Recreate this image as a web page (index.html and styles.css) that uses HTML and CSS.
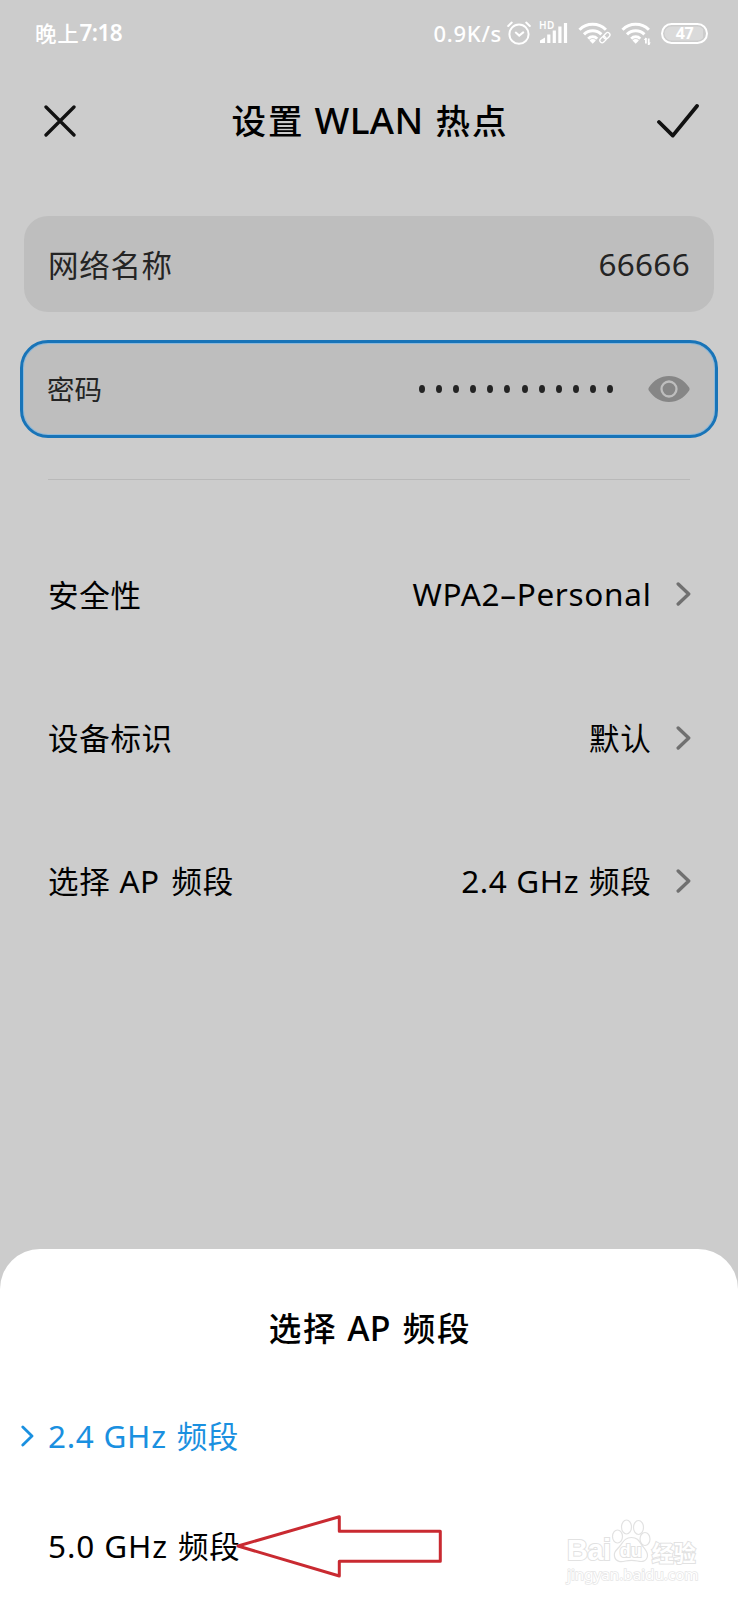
FILE: index.html
```html
<!DOCTYPE html>
<html lang="zh-CN">
<head>
<meta charset="utf-8">
<title>设置 WLAN 热点</title>
<link rel="stylesheet" href="styles.css">
</head>
<body>
<div class="phone">
  <header class="status">
    <div class="clock">晚上<span class="clock-num">7:18</span></div>
    <div class="status-right">
      <span class="speed">0.9K/s</span>
      <svg class="ic-alarm" width="24" height="24" viewBox="0 0 24 24" fill="none" stroke="#fff" stroke-width="2" stroke-linecap="round"><circle cx="12" cy="13.2" r="9.6"/><path d="M1.2 5 4.8 1.6M22.8 5 19.2 1.6M8.8 11.6l3.4 3 4-3.2"/></svg>
      <div class="signal">
        <span class="hd">HD</span>
        <svg width="29" height="24" viewBox="0 0 29 24" fill="#fff"><path d="M1 22v-2.5l5-3V22zM8.2 13.6h3.2V22H8.2zM13.7 9.4h3.2V22h-3.2zM19.3 5.6h3.2V22h-3.2zM24.9 2h3.2v20h-3.2z"/></svg>
      </div>
      <svg class="ic-wifi" width="34" height="24" viewBox="0 0 34 24" fill="none" stroke="#fff" stroke-width="3"><path d="M1.5 8.800a18.500 18.500 0 0 1 26.4 0M6 13.400a12.200 12.200 0 0 1 17.4 0M10.200 17.700a6.400 6.400 0 0 1 9 0"/><path d="m14.7 22.8-3.2-3.400a4.600 4.600 0 0 1 6.400 0z" fill="#fff" stroke="none"/><g stroke="#ccc" stroke-width="7"><path d="m23.500 20.500 7.500-8"/></g><g stroke-width="1.300"><rect x="21.500" y="16.300" width="7" height="4.600" rx="2.300" transform="rotate(-45 25 18.600)"/><rect x="25.300" y="12.400" width="7" height="4.600" rx="2.300" transform="rotate(-45 28.800 14.700)"/></g></svg>
      <svg class="ic-wifi2" width="32" height="24" viewBox="0 0 32 24" fill="none" stroke="#fff" stroke-width="3"><path d="M1.5 8.800a18.500 18.500 0 0 1 26.4 0M6 13.400a12.200 12.200 0 0 1 17.4 0M10.200 17.700a6.400 6.400 0 0 1 9 0"/><path d="m14.7 22.8-3.2-3.400a4.600 4.600 0 0 1 6.400 0z" fill="#fff" stroke="none"/><path d="M22.5 24v-9h8v9z" fill="#ccc" stroke="none"/><path d="M24.9 17v5.500M27.700 17.500V24" stroke-width="1.800"/><path d="m22.8 19 2.100-2.800v2.800zM29.800 21.600 27.700 24.400v-2.800z" fill="#fff" stroke="none"/></svg>
      <div class="battery"><span>47</span></div>
    </div>
  </header>

  <nav class="bar">
    <svg width="32" height="32" viewBox="0 0 32 32" fill="none" stroke="#111" stroke-width="3.3" stroke-linecap="round"><path d="m2 2 28 28M30 2 2 30"/></svg>
    <h1>设置<span class="lat">WLAN</span>热点</h1>
    <svg width="42" height="34" viewBox="0 0 42 34" fill="none" stroke="#111" stroke-width="3.8" stroke-linecap="round" stroke-linejoin="round"><path d="M2 18 15.8 31.6 40 2"/></svg>
  </nav>

  <section class="fields">
    <div class="field"><span class="field-label">网络名称</span><span class="field-value">66666</span></div>
    <div class="field focused">
      <span class="field-label small">密码</span>
      <div class="dots"><i></i><i></i><i></i><i></i><i></i><i></i><i></i><i></i><i></i><i></i><i></i><i></i></div>
      <svg width="42" height="28" viewBox="0 0 42 28"><path d="M1 12.2C6 5 12.500 1 21 1s15 4 20 11.200q1.200 1.800 0 3.600C36 23 29.500 27 21 27S6 23 1 15.800q-1.200-1.800 0-3.600z" fill="#868686"/><circle cx="21" cy="14" r="7.500" fill="none" stroke="#bebebe" stroke-width="2.300"/></svg>
    </div>
  </section>

  <div class="divider"></div>

  <section class="rows">
    <div class="row"><span>安全性</span><span class="value"><span class="lat wpa">WPA2–Personal</span></span><svg class="chev" width="15" height="24" viewBox="0 0 15 24"><path d="m2.200 2 10.500 10-10.500 10"/></svg></div>
    <div class="row"><span>设备标识</span><span class="value">默认</span><svg class="chev" width="15" height="24" viewBox="0 0 15 24"><path d="m2.200 2 10.500 10-10.500 10"/></svg></div>
    <div class="row"><span>选择<span class="lat ap">AP</span>频段</span><span class="value"><span class="lat ghz">2.4 GHz</span>频段</span><svg class="chev" width="15" height="24" viewBox="0 0 15 24"><path d="m2.200 2 10.500 10-10.500 10"/></svg></div>
  </section>

  <section class="sheet">
    <h2>选择<span class="lat">AP</span>频段</h2>
    <div class="option active"><svg width="13" height="22" viewBox="0 0 13 22"><path d="m1.800 2 9.200 9-9.200 9"/></svg><span><span class="lat ghz">2.4 GHz</span>频段</span></div>
    <div class="option"><span><span class="lat ghz five">5.0 GHz</span>频段</span></div>
  </section>

  <svg class="arrow" width="208" height="66" viewBox="0 0 208 66"><path d="m3 34 101.300-29.300v14.600h101v30h-101V64z"/></svg>

  <div class="mark">
    <div class="mark-top">
      <span class="mark-bai">Bai</span>
      <div class="paw">
        <svg width="40" height="45" viewBox="0 0 40 45" fill="#fff" stroke="#e2e2e2" stroke-width="1.200"><ellipse cx="6.500" cy="17.500" rx="5" ry="6.500"/><ellipse cx="15.500" cy="8" rx="5" ry="7"/><ellipse cx="27.500" cy="8.500" rx="5" ry="7"/><ellipse cx="34" cy="20" rx="5" ry="6.500"/><path d="M20.500 18.500c-7 0-8.500 5-12 9s-6 6-5 10c1.500 6 7 5.500 11 4.500 4-.8 8-.8 12 0 4 1 9 1 10-5 .5-4-2-6.500-5-10s-4-8.500-11-8.500z"/></svg>
        <span>du</span>
      </div>
      <span class="mark-jy">经验</span>
    </div>
    <div class="mark-url">jingyan.baidu.com</div>
  </div>
</div>
</body>
</html>
```

FILE: styles.css
```css
* { box-sizing: border-box; margin: 0; padding: 0; }
body { width: 738px; height: 1600px; overflow: hidden; background: #ccc; }
svg { display: block; flex: none; }
.phone {
  position: relative;
  display: flex;
  flex-direction: column;
  width: 738px;
  height: 1600px;
  overflow: hidden;
  font-family: "Noto Sans CJK SC", "Noto Sans", sans-serif;
  font-size: 30.5px;
  letter-spacing: 0.7px;
  line-height: 1;
  color: #000;
  white-space: nowrap;
}
.lat { font-family: "Noto Sans", sans-serif; }

.status {
  display: flex;
  justify-content: space-between;
  align-items: center;
  height: 66px;
  padding: 0 30px 0 35px;
  color: #fff;
  font-size: 21.5px;
  font-weight: 500;
}
.clock { display: flex; align-items: center; height: 24px; }
.clock-num { font-family: "Noto Sans", sans-serif; font-size: 22.5px; font-weight: 600; letter-spacing: -0.5px; padding-top: 1px; }
.status-right { display: flex; align-items: center; }
.speed { font-family: "Noto Sans", sans-serif; font-size: 22px; letter-spacing: 0.7px; margin-right: 5px; padding-bottom: 1px; }
.ic-alarm { margin-right: 8px; }
.signal { position: relative; margin-right: 10px; }
.hd { position: absolute; left: 0; top: -1px; font-family: "Noto Sans", sans-serif; font-size: 10px; font-weight: 600; letter-spacing: 0.4px; }
.ic-wifi { margin-right: 9px; }
.ic-wifi2 { margin-right: 8px; }
.battery {
  display: flex;
  align-items: center;
  justify-content: center;
  width: 47px;
  height: 21px;
  border: 2px solid #fff;
  border-radius: 11px;
  box-shadow: inset 0 0 0 1.500px #ccc;
  background: linear-gradient(90deg, #dadada 0 40px, #ccc 40px);
  font-family: "Noto Sans", sans-serif;
  font-size: 16px;
  font-weight: 700;
  letter-spacing: -0.5px;
}

.bar {
  display: flex;
  justify-content: space-between;
  align-items: center;
  height: 110px;
  padding: 0 39px 0 44px;
}
.bar h1 { font-size: 34.5px; font-weight: 500; letter-spacing: 2px; padding-bottom: 3px; margin-left: 7px; }
.bar h1 .lat { font-size: 37px; margin: 0 12px 0 10px; letter-spacing: 0.4px; }

.fields { display: flex; flex-direction: column; gap: 28px; padding: 40px 20px 0; }
.field {
  display: flex;
  align-items: center;
  height: 96px;
  margin: 0 4px;
  padding: 0 24px;
  border-radius: 24px;
  background: #bebebe;
  color: #242424;
}
.field-value { margin-left: auto; font-family: "Noto Sans", sans-serif; font-size: 31.500px; letter-spacing: 0.3px; }
.focused {
  height: 98px;
  margin: 0;
  border: 3px solid #1874b8;
  border-radius: 28px;
  box-shadow: inset 0 0 0 1px #8cb9dc;
  padding: 0 25px 0 24px;
}
.small { font-size: 27.500px; letter-spacing: 0; }
.dots { display: flex; gap: 11.100px; margin-left: auto; margin-right: 35px; }
.dots i { width: 6px; height: 8px; border-radius: 50%; background: #242424; }

.divider { height: 1px; margin: 41px 48px 0; background: #b9b9b9; }

.rows { padding: 42px 48px 0; }
.row { display: flex; align-items: center; height: 143.700px; }
.value { margin-left: auto; margin-right: 24.500px; }
.wpa { font-size: 31.500px; letter-spacing: 0.7px; }
.ap { font-size: 31.500px; letter-spacing: 0.5px; margin: 0 12px 0 9px; }
.ghz { font-size: 31.500px; letter-spacing: 0.6px; margin-right: 10px; }
.chev { margin-right: -1px; }
.chev path { fill: none; stroke: #707070; stroke-width: 3.400; stroke-linecap: round; stroke-linejoin: round; }

.sheet {
  position: absolute;
  left: 0;
  right: 0;
  bottom: 0;
  height: 351px;
  padding-top: 25px;
  border-radius: 40px 40px 0 0;
  background: #fff;
}
.sheet h2 { height: 107px; padding-left: 2px; line-height: 105px; text-align: center; font-size: 32.500px; font-weight: 500; letter-spacing: 1.700px; }
.sheet h2 .lat { font-size: 34px; margin: 0 12px 0 10px; letter-spacing: 0.3px; }
.option { display: flex; align-items: center; height: 110px; padding-left: 48px; }
.active { padding-left: 21px; gap: 14px; color: #1a90e0; }
.option .ghz { letter-spacing: 0.7px; margin-right: 10px; }
.option .five { letter-spacing: 0.9px; }
.active path { fill: none; stroke: #1a90e0; stroke-width: 2.800; stroke-linecap: round; stroke-linejoin: round; }

.arrow { position: absolute; left: 235px; top: 1512px; }
.arrow path { fill: none; stroke: #c92a31; stroke-width: 3; stroke-linejoin: round; }

.mark { position: absolute; left: 567px; top: 1519px; width: 134px; color: #fff; letter-spacing: 0; }
.mark-top { display: flex; align-items: flex-end; height: 45px; }
.mark-bai, .mark-jy, .paw span { -webkit-text-stroke: 2px #e2e2e2; paint-order: stroke fill; font-weight: 700; }
.mark-bai { font-family: "Liberation Sans", sans-serif; font-size: 29px; line-height: 28px; letter-spacing: -0.5px; }
.paw { position: relative; margin-left: 0; }
.paw span { position: absolute; left: 9px; top: 22px; font: 700 18px/20px "Liberation Sans", sans-serif; }
.mark-jy { font-size: 22px; line-height: 26px; margin-left: 1px; }
.mark-url { margin-top: 1px; font: 15.200px/18px "Noto Sans", sans-serif; -webkit-text-stroke: 1.500px #e6e6e6; paint-order: stroke fill; }
```
